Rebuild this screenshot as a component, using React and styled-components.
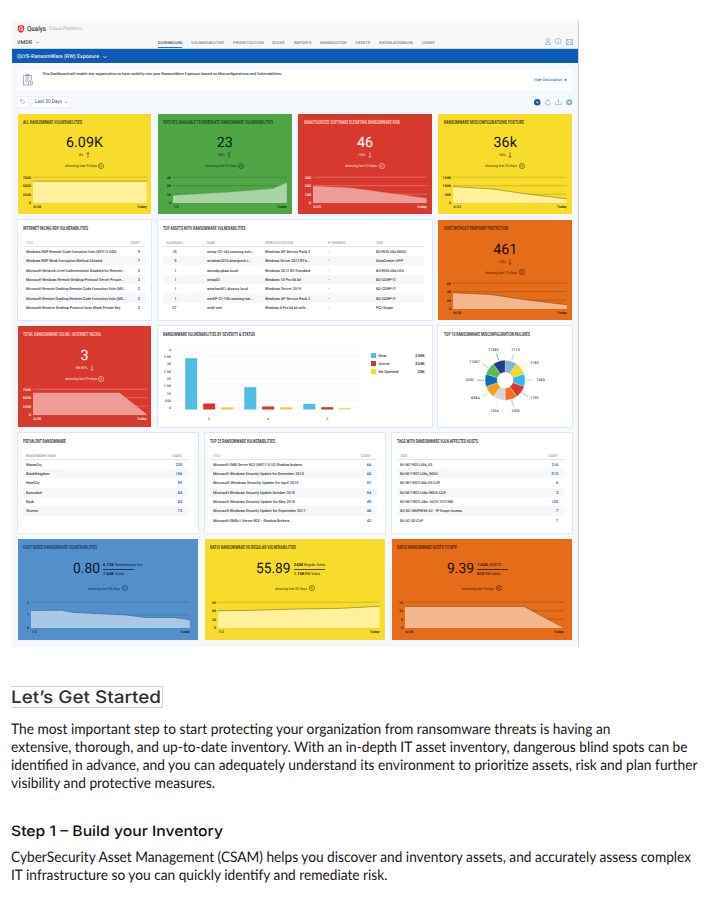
import React, { useLayoutEffect, useRef, useState } from "react";
import styled, { createGlobalStyle } from "styled-components";

const GlobalStyle = createGlobalStyle`
  * { box-sizing: border-box; }
  body { margin: 0; background: #fff; font-family: Roboto, "Liberation Sans", sans-serif; text-rendering: geometricPrecision; }
  h1, h2, h3, p { margin: 0; font-weight: inherit; }
  svg { display: block; overflow: visible; }
`;

/* Text condensed or expanded horizontally to a set width. */
const FitBox = styled.span`
  display: inline-block;
  flex: none;
  width: ${(p) => p.$w}px;
  white-space: nowrap;
  vertical-align: top;
`;
const FitText = styled.span`
  display: inline-block;
  transform-origin: 0 50%;
`;
function Fit({ w, children }) {
  const ref = useRef(null);
  const [scale, setScale] = useState(1);
  useLayoutEffect(() => {
    const el = ref.current;
    el.style.transform = "none";
    const s = w / el.getBoundingClientRect().width;
    el.style.transform = `scaleX(${s})`;
    setScale(s);
  }, [w, children]);
  return (
    <FitBox $w={w}>
      <FitText ref={ref} style={{ transform: `scaleX(${scale})` }}>{children}</FitText>
    </FitBox>
  );
}

const Page = styled.main`
  width: 720px;
  height: 900px;
  padding: 21px 0 0 11.5px;
  overflow: hidden;
`;
const Dashboard = styled.section`
  width: 567px;
  height: 626px;
  background: #f5f8fc;
  border-right: 1px solid #c9cfe2;
`;
const Header = styled.header`
  height: 28px;
  background: #f7f7f8;
  border-bottom: 1px solid #b9e0f5;
  padding: 2.5px 5px 0 5.5px;
`;
const Brand = styled.div`
  display: flex;
  align-items: center;
  height: 10px;
  gap: 2.3px;
  font-size: 7px;
  font-weight: 500;
  color: #3a3d42;
`;
const BrandSub = styled.span`
  font-size: 4.8px;
  font-weight: 400;
  color: #a5a8ad;
  padding-top: 1px;
`;
const NavRow = styled.div`
  display: flex;
  height: 15px;
  align-items: center;
  padding-top: 1px;
`;
const Product = styled.div`
  width: 140.5px;
  padding-top: 2px;
  display: flex;
  align-items: center;
  gap: 4px;
  font-size: 5.4px;
  font-weight: 500;
  color: #46494e;
`;
const Nav = styled.nav`
  display: flex;
  gap: 8.8px;
  flex: 1;
  padding-top: 2.5px;
`;
const NavItem = styled.span`
  height: 8px;
  font-size: 4px;
  line-height: 8px;
  font-weight: 500;
  color: ${(p) => (p.$active ? "#3e5368" : "#85888c")};
  box-shadow: ${(p) => (p.$active ? "0 1px 0 #2d72b4" : "none")};
`;
const Icons = styled.div`
  display: flex;
  align-items: center;
  gap: ${(p) => p.$gap}px;
`;
const TitleBar = styled.div`
  height: 14px;
  background: #0b5cb4;
  color: #e4effa;
  display: flex;
  align-items: center;
  gap: 4px;
  padding: 1px 0 0 5.5px;
  font-size: 5.4px;
  font-weight: 500;
`;
const Description = styled.div`
  display: flex;
  align-items: center;
  margin: 6.5px 6px 0 5.5px;
  height: 20px;
  background: #fff;
  padding: 0 5px 0 6px;
  font-size: 3.9px;
  font-weight: 500;
  color: #33363a;
  gap: 8.5px;
`;
const DescriptionText = styled.p`
  flex: 1;
  height: 16.5px;
  line-height: 6px;
`;
const HideLink = styled.span`
  color: #3479b8;
  display: flex;
  align-items: center;
  gap: 1.5px;
`;
const Filters = styled.div`
  display: flex;
  align-items: center;
  justify-content: space-between;
  height: 24px;
  padding: 0.5px 5px 0 5.5px;
`;
const Chips = styled.div`
  display: flex;
  gap: 2px;
`;
const Chip = styled.div`
  height: 11.5px;
  width: ${(p) => p.$w}px;
  background: #fcfdfe;
  border: 0.5px solid #eef1f5;
  display: flex;
  align-items: center;
  justify-content: center;
  gap: 3.5px;
  font-size: 5.3px;
  color: #4c5055;
`;
const Grid = styled.div`
  display: grid;
  grid-template-columns: repeat(12, minmax(0, 1fr));
  grid-auto-rows: 100.4px;
  gap: 6.05px 6.3px;
  margin: 0 5.3px 0 6px;
`;

const tones = {
  yellow: { bg: "#f8dc2b", ink: "#151504", title: "#514b12", line: "#665e17", grid: "#b8a523", fill: "#fff19b" },
  green: { bg: "#50a547", ink: "#06240a", title: "#174c18", line: "#65a65f", grid: "#378236", fill: "#a9d4a3" },
  red: { bg: "#d7392f", ink: "#ffffff", title: "#ffc7bd", line: "#ec9b92", grid: "#eb8b82", fill: "#ed9c97" },
  orange: { bg: "#e56c18", ink: "#211004", title: "#572706", line: "#7a4216", grid: "#a5500f", fill: "#f4b68d" },
  blue: { bg: "#5390cb", ink: "#07192e", title: "#1c426b", line: "#26537f", grid: "#416f9d", fill: "#a9c8e7" },
};

const Card = styled.article`
  grid-column: span ${(p) => p.$span};
  background: ${(p) => (p.$tone ? tones[p.$tone].bg : "#fff")};
  color: ${(p) => (p.$tone ? tones[p.$tone].ink : "#35383c")};
  box-shadow: ${(p) => (p.$tone ? "none" : "0 0 0 0.8px #dce4f0")};
  display: flex;
  flex-direction: column;
  min-width: 0;
`;
const CardTitle = styled.h3`
  height: 12.5px;
  padding: 6px 0 0 5.7px;
  font-size: 5.5px;
  line-height: 6.5px;
  font-weight: 700;
  color: ${(p) => (p.$tone ? tones[p.$tone].title : "#404347")};
`;
const ValueRow = styled.div`
  height: 16px;
  margin-top: 9.3px;
  display: flex;
  align-items: center;
  justify-content: center;
  gap: 3.5px;
  font-size: 14.3px;
  line-height: 16px;
`;
const Delta = styled.div`
  height: 8px;
  margin-top: 0;
  display: flex;
  align-items: center;
  justify-content: center;
  gap: 2.5px;
  font-size: 3.5px;
  font-weight: 500;
  opacity: 0.85;
`;
const Showing = styled.div`
  height: 8px;
  margin-top: ${(p) => p.$top}px;
  display: flex;
  align-items: center;
  justify-content: center;
  gap: 1.5px;
  font-size: 3.9px;
  opacity: 0.8;
`;
const Fraction = styled.div`
  width: 40px;
  font-size: 4px;
  line-height: 5px;
  display: flex;
  flex-direction: column;
  white-space: nowrap;
`;
const FractionLine = styled.div`
  width: 31px;
  height: 0.8px;
  margin: 2px 0;
  background: currentColor;
  opacity: 0.7;
`;
const ChartWrap = styled.div`
  margin-top: auto;
  height: 40.4px;
`;
const ChartText = styled.text`
  font-size: ${(p) => p.$size || 3.6}px;
  font-weight: 500;
`;

function Ring() {
  return (
    <svg width="6" height="6" viewBox="0 0 11 11" fill="none" stroke="currentColor" strokeWidth="1.1">
      <circle cx="5.5" cy="5.5" r="4.7" /><path d="M5.5 3v2.8L7 7M4 3.5v4" strokeWidth="0.8" />
    </svg>
  );
}
function Arrow({ up }) {
  return (
    <svg width="4" height="6" viewBox="0 0 8 12" fill="none" stroke="currentColor" strokeWidth="1.1">
      <path d={up ? "M4 12V1M1 4l3-3 3 3" : "M4 0v11M1 8l3 3 3-3"} />
    </svg>
  );
}
function Chevron({ size = 3 }) {
  return (
    <svg width={size} height={size} viewBox="0 0 8 8" fill="none" stroke="currentColor" strokeWidth="1.8"><path d="M1 2.5 4 5.5 7 2.5" /></svg>
  );
}

/* Points are [fraction of width, y] pairs; y runs from 3.4 (top grid line) to 28.9 (base). */
function AreaChart({ tone, width, left, right, ticks, from, points }) {
  const t = tones[tone];
  const xy = points.map(([f, y]) => [left + f * (right - left), y]);
  const line = xy.map((p) => p.join(",")).join(" ");
  const step = 25.5 / (ticks.length - 1);
  return (
    <ChartWrap>
      <svg width={width} height="40" fill={t.ink}>
        {ticks.map((k, i) => (
          <g key={i}>
            <line x1={left} x2={right} y1={3.2 + i * step} y2={3.2 + i * step} stroke={t.grid} strokeWidth="0.6" />
            <ChartText x={left - 2} y={4.5 + i * step} textAnchor="end">{k}</ChartText>
          </g>
        ))}
        <polygon points={`${left},28.9 ${line} ${right},28.9`} fill={t.fill} />
        <polyline points={line} fill="none" stroke={t.line} strokeWidth="0.5" />
        <ChartText x={left + 0.5} y="33.6">{from}</ChartText>
        <ChartText x={right} y="33.6" textAnchor="end">Today</ChartText>
      </svg>
    </ChartWrap>
  );
}

function Metric({ tone, title, tw, value, delta, up, showing, ...chart }) {
  return (
    <Card $span={3} $tone={tone}>
      <CardTitle $tone={tone}><Fit w={tw}>{title}</Fit></CardTitle>
      <ValueRow>{value}</ValueRow>
      <Delta>{delta}<Arrow up={up} /></Delta>
      <Showing $top={2.5}><Fit w={32}>{showing}</Fit><Ring /></Showing>
      <AreaChart tone={tone} width={134} left={15} right={128.8} {...chart} />
    </Card>
  );
}
function Ratio({ tone, title, tw, value, vw, top, bottom, showing, ...chart }) {
  return (
    <Card $span={4} $tone={tone}>
      <CardTitle $tone={tone}><Fit w={tw}>{title}</Fit></CardTitle>
      <ValueRow>
        <Fit w={vw}>{value}</Fit>
        <Fraction>
          <span><b>{top[0]}</b> <Fit w={top[2]}>{top[1]}</Fit></span>
          <FractionLine />
          <span><b>{bottom[0]}</b> <Fit w={bottom[2]}>{bottom[1]}</Fit></span>
        </Fraction>
      </ValueRow>
      <Showing $top={7.2}><Fit w={32}>{showing}</Fit><Ring /></Showing>
      <AreaChart tone={tone} width={181} left={13} {...chart} />
    </Card>
  );
}

const Table = styled.div`
  margin: 7px ${(p) => p.$mr}px 0 5.5px;
  font-size: 3.9px;
  font-weight: 500;
  color: #303338;
`;
const Row = styled.div`
  display: grid;
  grid-template-columns: ${(p) => p.$cols};
  align-items: center;
  height: ${(p) => (p.$head ? 7.2 : 9.37)}px;
  padding: 0 6px 0 2.5px;
  white-space: nowrap;
  ${(p) => p.$head && "font-size: 3.9px; font-weight: 400; color: #777b82; border-bottom: 0.6px solid #e3e6ea;"}
  background: ${(p) => (p.$alt ? "#f6f7f8" : "transparent")};
`;
const Cell = styled.span`
  text-align: ${(p) => p.$align || "left"};
  color: ${(p) => (p.$num ? "#2668ad" : "inherit")};
  font-weight: ${(p) => (p.$num ? 700 : "inherit")};
`;

function ListCard({ span, title, tw, mr = 5.5, heads, rows, chw }) {
  return (
    <Card $span={span}>
      <CardTitle><Fit w={tw}>{title}</Fit></CardTitle>
      <Table $mr={mr}>
        <Row $head $cols="1fr auto">
          <Cell><Fit w={heads[1]}>{heads[0]}</Fit></Cell>
          <Cell><Fit w={10}>COUNT</Fit></Cell>
        </Row>
        {rows.map(([name, count, w], i) => (
          <Row key={i} $alt={i % 2 === 1} $cols="1fr auto">
            <Cell><Fit w={w || name.length * chw}>{name}</Fit></Cell>
            <Cell $num>{count}</Cell>
          </Row>
        ))}
      </Table>
    </Card>
  );
}

const assetCols = "17px 24.5px 58px 63px 47.5px 1fr";
const assetRows = [
  ["18", "winxp-32-143.roaming-actv...", 47, "Windows XP Service Pack 2", 45, "BU-REDLABs-INDIA", 30],
  ["5", "windows2016.sharepoint.t...", 44, "Windows Server 2012 R2 6...", 45, "DataCenter-APP", 27],
  ["1", "winxdq.qbas.local", 31, "Windows 2012 R2 Standard", 45, "BU-REDLABs-USA", 28],
  ["1", "winxp02", 13, "Windows 10 Pro 64 bit", 36, "BU-CORP-IT", 20],
  ["1", "winxhack01.dioacro.local", 41, "Windows Server 2019", 36, "BU-CORP-IT", 20],
  ["1", "winXP-32-158.roaming-nat...", 46, "Windows XP Service Pack 2", 45, "BU-CORP-IT", 20],
  ["27", "win8-vnet", 15, "Windows 8 Pro 64 bit with...", 43, "PCI-Scope", 17],
];

const bars = [
  [22.2, 51.3, "#51bde1"], [40.2, 6, "#d2362f"], [58.2, 2.2, "#edcf38"],
  [81.3, 22.3, "#51bde1"], [99.2, 3, "#d2362f"], [117.2, 2.2, "#edcf38"],
  [140.3, 5.7, "#51bde1"], [158.2, 2.3, "#d2362f"], [175.8, 1.3, "#edd64c"],
];
const barTicks = ["4", "3.5K", "3K", "2.5K", "2K", "1.5K", "1K", "500", "0"];
const legend = [["#51bde1", "New", "230K"], ["#d2362f", "Active", "253K"], ["#f8dc2b", "Re-Opened", "23K"]];
const BarBody = styled.div`
  display: flex;
  height: 87px;
`;
const Legend = styled.div`
  width: 53.5px;
  margin: 14.3px 0 0 10.3px;
  display: flex;
  flex-direction: column;
  gap: 2.7px;
  font-size: 4px;
  font-weight: 500;
`;
const LegendRow = styled.div`
  display: grid;
  grid-template-columns: 5px 1fr auto;
  align-items: center;
  height: 5px;
  gap: 2.5px;
`;
const Swatch = styled.span`
  width: 5px;
  height: 5px;
  background: ${(p) => p.$c};
`;

function SeverityCard() {
  return (
    <Card $span={6}>
      <CardTitle><Fit w={92}>RANSOMWARE VULNERABILITIES BY SEVERITY &amp; STATUS</Fit></CardTitle>
      <BarBody>
        <svg width="203" height="87" fill="#55585d">
          {barTicks.map((t, i) => (
            <g key={t}>
              <line x1="16" x2="203" y1={10.5 + i * 7.3} y2={10.5 + i * 7.3} stroke="#eff1f4" strokeWidth="0.6" />
              <ChartText x="13" y={11.8 + i * 7.3} textAnchor="end">{t}</ChartText>
            </g>
          ))}
          {bars.map(([x, h, c]) => <rect key={x} x={x + 5} y={70.5 - h} width="12" height={h} fill={c} />)}
          {["5", "4", "3"].map((t, i) => <ChartText key={t} x={51 + i * 59.1} y="81" textAnchor="middle">{t}</ChartText>)}
        </svg>
        <Legend>
          {legend.map(([c, n, v]) => <LegendRow key={n}><Swatch $c={c} /><span>{n}</span><b>{v}</b></LegendRow>)}
        </Legend>
      </BarBody>
    </Card>
  );
}

const slices = [
  ["#83b7ce", "T175", 77.5, 10.5], ["#f6d62b", "T182", 96.5, 23.5], ["#2bbaf0", "T490", 102.5, 40.5],
  ["#d63a2f", "1793", 96.5, 59], ["#f47029", "1020", 77.5, 71.5], ["#d3d6db", "1024", 56.5, 71.2],
  ["#f99e1c", "B384", 37.2, 59], ["#0a6cbe", "0307", 32.2, 41], ["#5dba52", "T1007", 36.5, 23], ["#233a86", "T1082", 55.5, 10.5],
];
function DonutCard() {
  const cx = 67.1, cy = 41.2;
  const pt = (r, i) => {
    const a = (i * Math.PI) / 5;
    return `${cx + r * Math.sin(a)} ${cy - r * Math.cos(a)}`;
  };
  return (
    <Card $span={3}>
      <CardTitle><Fit w={86}>TOP 10 RANSOMWARE MISCONFIGURATION FAILURES</Fit></CardTitle>
      <svg width="134" height="87" fill="#44474b">
        {slices.map(([c, label, x, y], i) => (
          <g key={label}>
            <path d={`M${pt(21, i + 0.5)}L${pt(28, i + 0.5)}`} stroke={c} strokeWidth="0.5" />
            <path d={`M${pt(8, i)}L${pt(20, i)}A20 20 0 0 1 ${pt(20, i + 1)}L${pt(8, i + 1)}A8 8 0 0 0 ${pt(8, i)}Z`} fill={c} stroke="#fff" strokeWidth="0.25" />
            <ChartText $size={3.7} x={x} y={y + 1.3} textAnchor="middle">{label}</ChartText>
          </g>
        ))}
      </svg>
    </Card>
  );
}

const Article = styled.section`
  padding-top: 39px;
  margin-left: -0.5px;
  color: #161616;
`;
const Heading = styled.h1`
  display: block;
  width: 151.5px;
  height: 22px;
  border: solid #d2d2d2;
  border-width: 1px 1px 1px 0;
  font: 500 17.2px/21.5px Inter, sans-serif;
  color: #303030;
`;
const StepHeading = styled.h2`
  height: 20px;
  margin-top: 28px;
  font: 500 14.3px/21px Inter, sans-serif;
  color: #111;
`;
const Paragraph = styled.p`
  display: flex;
  flex-direction: column;
  margin-top: ${(p) => p.$top}px;
  font: 400 14.6px/18px Lato, sans-serif;
`;

export default function App() {
  return (
    <>
      <GlobalStyle />
      <Page>
        <Dashboard>
          <Header>
            <Brand>
              <svg width="8" height="8" viewBox="0 0 16 16">
                <path d="M2 2Q8-1 14 2Q17 11 8 16Q-1 11 2 2Z" fill="#e1262d" />
                <circle cx="8" cy="7" r="3.6" fill="none" stroke="#fff" strokeWidth="1.7" /><path d="M8 7l3 4" stroke="#fff" strokeWidth="1.5" />
              </svg>
              <Fit w={19}>Qualys</Fit>
              <BrandSub><Fit w={33}>Cloud Platform</Fit></BrandSub>
            </Brand>
            <NavRow>
              <Product><Fit w={15}>VMDR</Fit><Chevron /></Product>
              <Nav>
                <NavItem $active><Fit w={24.5}>DASHBOARD</Fit></NavItem>
                <NavItem><Fit w={33}>VULNERABILITIES</Fit></NavItem>
                <NavItem><Fit w={31}>PRIORITIZATION</Fit></NavItem>
                <NavItem><Fit w={12.5}>SCANS</Fit></NavItem>
                <NavItem><Fit w={17.5}>REPORTS</Fit></NavItem>
                <NavItem><Fit w={26.5}>REMEDIATION</Fit></NavItem>
                <NavItem><Fit w={15}>ASSETS</Fit></NavItem>
                <NavItem><Fit w={34}>KNOWLEDGEBASE</Fit></NavItem>
                <NavItem><Fit w={12.5}>USERS</Fit></NavItem>
              </Nav>
              <Icons $gap={4}>
                <svg width="6" height="7" viewBox="0 0 12 14" fill="none" stroke="#6fa3d0" strokeWidth="1.2"><circle cx="6" cy="4" r="3" /><path d="M1 13c0-7 10-7 10 0Z" /></svg>
                <svg width="6.5" height="6.5" viewBox="0 0 13 13" fill="none" stroke="#6fa3d0" strokeWidth="1.2"><circle cx="6.5" cy="6.5" r="5.7" /><path d="M6.5 3v1.3M6.5 5.5V10" /></svg>
                <svg width="7" height="6" viewBox="0 0 14 12" fill="none" stroke="#6fa3d0" strokeWidth="1.2"><path d="M1 1h12v10H1ZM1 1l6 6 6-6M1 11l4-5M13 11 9 6" /></svg>
              </Icons>
            </NavRow>
          </Header>
          <TitleBar><Fit w={82}>QLYS-RansomWare (RW) Exposure</Fit><Chevron size={4} /></TitleBar>
          <Description>
            <svg width="10" height="12" viewBox="0 0 20 24" fill="none" stroke="#777c83" strokeWidth="1.2">
              <path d="M12 22H1V3h16v9M6 3V1h6v3H6ZM4 8h10M4 12h8M4 16h5" /><circle cx="15" cy="18" r="4.5" /><path d="M15 15v4l2 1" />
            </svg>
            <DescriptionText><Fit w={240}>This Dashboard will enable any organization to have visibility into your RansomWare Exposure based on Misconfigurations and Vulnerabilities.</Fit></DescriptionText>
            <HideLink><Fit w={28}>Hide Description</Fit>
              <svg width="3" height="3" viewBox="0 0 6 6"><path d="M0 5h6L3 1Z" fill="#22659f" /></svg>
            </HideLink>
          </Description>
          <Filters>
            <Chips>
              <Chip $w={11.5}>
                <svg width="5.5" height="5.5" viewBox="0 0 11 11" fill="none" stroke="#8b949d"><path d="M1 1h4l5 5-4 4-5-5Z" /><circle cx="3.3" cy="3.3" r=".7" /></svg>
              </Chip>
              <Chip $w={41}><Fit w={27}>Last 30 Days</Fit><Chevron size={2.5} /></Chip>
            </Chips>
            <Icons $gap={4.1}>
              <svg width="6.5" height="6.5" viewBox="0 0 12 12"><circle cx="6" cy="6" r="6" fill="#145ca8" /><path d="M6 3.8v4.4M3.8 6h4.4" stroke="#fff" strokeWidth="1" /></svg>
              <svg width="6" height="6.5" viewBox="0 0 12 13" fill="none" stroke="#86add0" strokeWidth="1.3"><path d="M8 2.5a5 5 0 1 0 3 4.5M5 0l4 2.7-3 3" /></svg>
              <svg width="7" height="6" viewBox="0 0 14 12" fill="none" stroke="#86add0" strokeWidth="1.3"><path d="M7 0v7M4.5 5 7 7.5 9.5 5M1 7v4h12V7" /></svg>
              <svg width="6.5" height="6.5" viewBox="0 0 13 13"><circle cx="6.5" cy="6.5" r="4.8" fill="#a6c8e5" stroke="#7fb0d9" strokeWidth="2.4" /><circle cx="6.5" cy="6.5" r="1.7" fill="#e2eef8" /></svg>
            </Icons>
          </Filters>
          <Grid>
            <Metric tone="yellow" title="ALL RANSOMWARE VULNERABILITIES" tw={59} value="6.09K" delta="0%" up showing="showing last 9 days" ticks={["7000", "5000", "2500", "0"]} from="6/28" points={[[0, 7.2], [1, 7.2]]} />
            <Metric tone="green" title="PATCHES AVAILABLE TO REMEDIATE RANSOMWARE VULNERABILITIES" tw={110} value="23" delta="35%" up showing="showing last 30 days" ticks={["4K", "2K", "1K", "0"]} from="7/2" points={[[0, 21.3], [0.5, 18], [0.88, 14.6], [1, 8.4]]} />
            <Metric tone="red" title="UNAUTHORIZED SOFTWARE ELEVATING RANSOMWARE RISK" tw={96} value="46" delta="-13%" showing="showing last 23 days" ticks={["300", "200", "100", "0"]} from="6/23" points={[[0, 12.3], [0.33, 14], [0.65, 19], [1, 24.5]]} />
            <Metric tone="yellow" title="RANSOMWARE MISCONFIGURATIONS POSTURE" tw={80} value="36k" delta="-10%" showing="showing last 30 days" ticks={["150K", "100K", "50K", "0"]} from="6/23" points={[[0, 12.6], [0.35, 15], [0.65, 20], [1, 24.8]]} />

            <ListCard span={3} title="INTERNET FACING RDP VULNERABILITIES" tw={65} heads={["TITLE", 7]} chw={1.8} rows={[
              ["Windows RDP Remote Code Execution Vuln (BSY13-020)", "9", 90.5],
              ["Windows RDP Weak Encryption Method Allowed", "7", 76],
              ["Microsoft Network Level Authentication Disabled for Remote...", "3", 99],
              ["Microsoft Windows Remote Desktop Protocol Server Private...", "3", 98],
              ["Microsoft Remote Desktop Remote Code Execution Vuln (MS...", "2", 100],
              ["Microsoft Remote Desktop Remote Code Execution Vuln (MS...", "2", 100],
              ["Microsoft Remote Desktop Protocol Uses Weak Private Key", "2", 94.5],
            ]} />
            <Card $span={6}>
              <CardTitle><Fit w={82.5}>TOP ASSETS WITH RANSOMWARE VULNERABILITIES</Fit></CardTitle>
              <Table $mr={8}>
                <Row $head $cols={assetCols}>
                  <Cell><Fit w={17}>VULNERABLE</Fit></Cell><span /><Cell><Fit w={8}>NAME</Fit></Cell><Cell><Fit w={28}>OPERATING SYSTEM</Fit></Cell><Cell><Fit w={17}>IP ADDRESS</Fit></Cell><Cell><Fit w={7}>TAGS</Fit></Cell>
                </Row>
                {assetRows.map(([n, name, nw, os, ow, tag, gw], i) => (
                  <Row key={name} $alt={i % 2 === 1} $cols={assetCols}>
                    <Cell $num $align="center">{n.padStart(2, "\u2007")}</Cell><span />
                    <Cell><Fit w={nw}>{name}</Fit></Cell><Cell><Fit w={ow}>{os}</Fit></Cell><Cell>-</Cell><Cell><Fit w={gw}>{tag}</Fit></Cell>
                  </Row>
                ))}
              </Table>
            </Card>
            <Metric tone="orange" title="HOST WITHOUT ENDPOINT PROTECTION" tw={64} value="461" delta="-13%" showing="showing last 19 days" ticks={["6K", "4K", "2K", "0"]} from="6/28" points={[[0, 12.8], [0.33, 14.5], [0.65, 20], [1, 24.8]]} />

            <Metric tone="red" title="TOTAL RANSOMWARE VULNS | INTERNET FACING" tw={78} value="3" delta="-99.97%" showing="showing last 29 days" ticks={["7500", "5000", "2500", "0"]} from="6/28" points={[[0, 7], [0.76, 7], [1, 28.6]]} />
            <SeverityCard />
            <DonutCard />

            <ListCard span={4} title="PREVALENT RANSOMWARE" tw={43} mr={10} heads={["RANSOMWARE NAME", 30]} chw={1.95} rows={[["WannaCry", "225"], ["BlackKingdom", "156"], ["NewlCry", "89"], ["Buncobid", "84"], ["Ryuk", "83"], ["Shorma", "73"]]} />
            <ListCard span={4} title="TOP 25 RANSOMWARE VULNERABILITIES" tw={65} mr={8} heads={["TITLE", 7]} chw={1.78} rows={[["Microsoft SMB Server RCE (MS17-010) Shadow brokers", "64"], ["Microsoft Windows Security Update for December 2018", "60"], ["Microsoft Windows Security Update for April 2019", "57"], ["Microsoft Windows Security Update October 2018", "54"], ["Microsoft Windows Security Update for May 2018", "49"], ["Microsoft Windows Security Update for September 2017", "46"], ["Microsoft SMBv1 Server RCE - Shadow Brokers", "42"]]} />
            <ListCard span={4} title="TAGS WITH RANSOMWARE VULN AFFECTED HOSTS" tw={81} mr={8} heads={["TAGS", 7]} chw={1.9} rows={[["BU-NET-ROTLABs_US", "216"], ["BU-NET-ROTLABs_INDIA", "913"], ["BU-NET-ROTLABs-US-CAP", "6"], ["BU-NET-ROTLABs-INDIA-CAP", "3"], ["BU-NET-ROTLABs- AUTH TESTING", "155"], ["BU-DC-UNIPREM-AC - IP Scope Access", "7", 62], ["BU-AC-SD-CAP", "7"]]} />

            <Ratio tone="blue" title="HOST BASED RANSOMWARE VULNERABILITIES" tw={74} value="0.80" vw={27} top={["6.12K", "Ransomware Vul..", 29]} bottom={["7.63K", "Vulns", 9]} showing="showing last 30 days" ticks={["2", "1", "0"]} right={171.8} from="7/2" points={[[0, 11.6], [0.19, 11.2], [0.27, 13.5], [0.6, 16], [0.72, 18.5], [0.9, 18.5], [1, 20.7]]} />
            <Ratio tone="yellow" title="RATIO RANSOMWARE VS REGULAR VULNERABILITIES" tw={86} value="55.89" vw={34.5} top={["242K", "Regular Vulns", 21]} bottom={["1.13K", "RW Vulns", 15]} showing="showing last 30 days" ticks={["90", "60", "30", "0"]} right={174.5} from="7/2" points={[[0, 11.8], [0.2, 11.3], [0.5, 10], [0.75, 9.4], [1, 7.3]]} />
            <Ratio tone="orange" title="RATIO RANSOMWARE HOSTS TO MTF" tw={60} value="9.39" vw={27} top={["7.62K", "HOSTS", 12]} bottom={["812", "RW Vulns", 15]} showing="showing last 5 days" ticks={["15", "10", "5", "0"]} right={171.5} from="6/28" points={[[0, 7.4], [0.75, 7.4], [1, 28.6]]} />
          </Grid>
        </Dashboard>
        <Article>
          <Heading><Fit w={150}>Let’s Get Started</Fit></Heading>
          <Paragraph $top={13}>
            <Fit w={599.5}>The most important step to start protecting your organization from ransomware threats is having an</Fit>
            <Fit w={676.5}>extensive, thorough, and up-to-date inventory. With an in-depth IT asset inventory, dangerous blind spots can be</Fit>
            <Fit w={686.5}>identified in advance, and you can adequately understand its environment to prioritize assets, risk and plan further</Fit>
            <Fit w={204}>visibility and protective measures.</Fit>
          </Paragraph>
          <StepHeading><Fit w={212}>Step 1 – Build your Inventory</Fit></StepHeading>
          <Paragraph $top={8}>
            <Fit w={680}>CyberSecurity Asset Management (CSAM) helps you discover and inventory assets, and accurately assess complex</Fit>
            <Fit w={376.5}>IT infrastructure so you can quickly identify and remediate risk.</Fit>
          </Paragraph>
        </Article>
      </Page>
    </>
  );
}
